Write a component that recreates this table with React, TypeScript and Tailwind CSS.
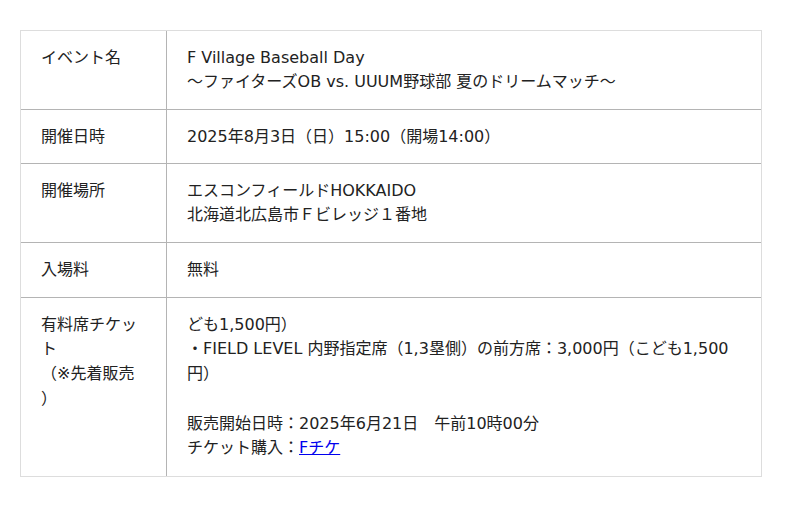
import React from "react";

const font = { fontFamily: '"DejaVu Sans", "Noto Sans CJK JP", sans-serif' };

const rows: { label: string; body: React.ReactNode }[] = [
  {
    label: "イベント名",
    body: (
      <>
        F Village Baseball Day
        <br />
        〜ファイターズOB vs. UUUM野球部 夏のドリームマッチ〜
      </>
    ),
  },
  { label: "開催日時", body: "2025年8月3日（日）15:00（開場14:00）" },
  {
    label: "開催場所",
    body: (
      <>
        エスコンフィールドHOKKAIDO
        <br />
        北海道北広島市Ｆビレッジ１番地
      </>
    ),
  },
  { label: "入場料", body: "無料" },
];

export default function App() {
  return (
    <div className="min-h-screen bg-white pt-[30px] pl-[20px] text-[#222]" style={font}>
      <div className="w-[742px] border border-[#dddddd]">
        <table className="w-full border-separate border-spacing-0 text-[16px]">
          <tbody>
            {rows.map((r, i) => (
              <tr key={i}>
                <td className="w-[146px] border-r border-b border-[#b4b4b4] px-5 py-[15px] align-top leading-[23.75px]">
                  {r.label}
                </td>
                <td className="border-b border-[#b4b4b4] px-5 py-[15px] align-top leading-[23.75px]">
                  {r.body}
                </td>
              </tr>
            ))}
            <tr>
              <td className="w-[146px] border-r border-[#b4b4b4] px-5 py-[15px] align-top leading-[24.75px]">
                有料席チケット
                <br />
                （※先着販売
                <br />）
              </td>
              <td className="px-5 py-[15px] align-top leading-[24.75px]">
                ども1,500円）
                <br />
                ・FIELD LEVEL 内野指定席（1,3塁側）の前方席：3,000円（こども1,500円）
                <br />
                <br />
                販売開始日時：2025年6月21日　午前10時00分
                <br />
                チケット購入：
                <a href="#" className="text-[#0000ee] underline">
                  Fチケ
                </a>
              </td>
            </tr>
          </tbody>
        </table>
      </div>
    </div>
  );
}
